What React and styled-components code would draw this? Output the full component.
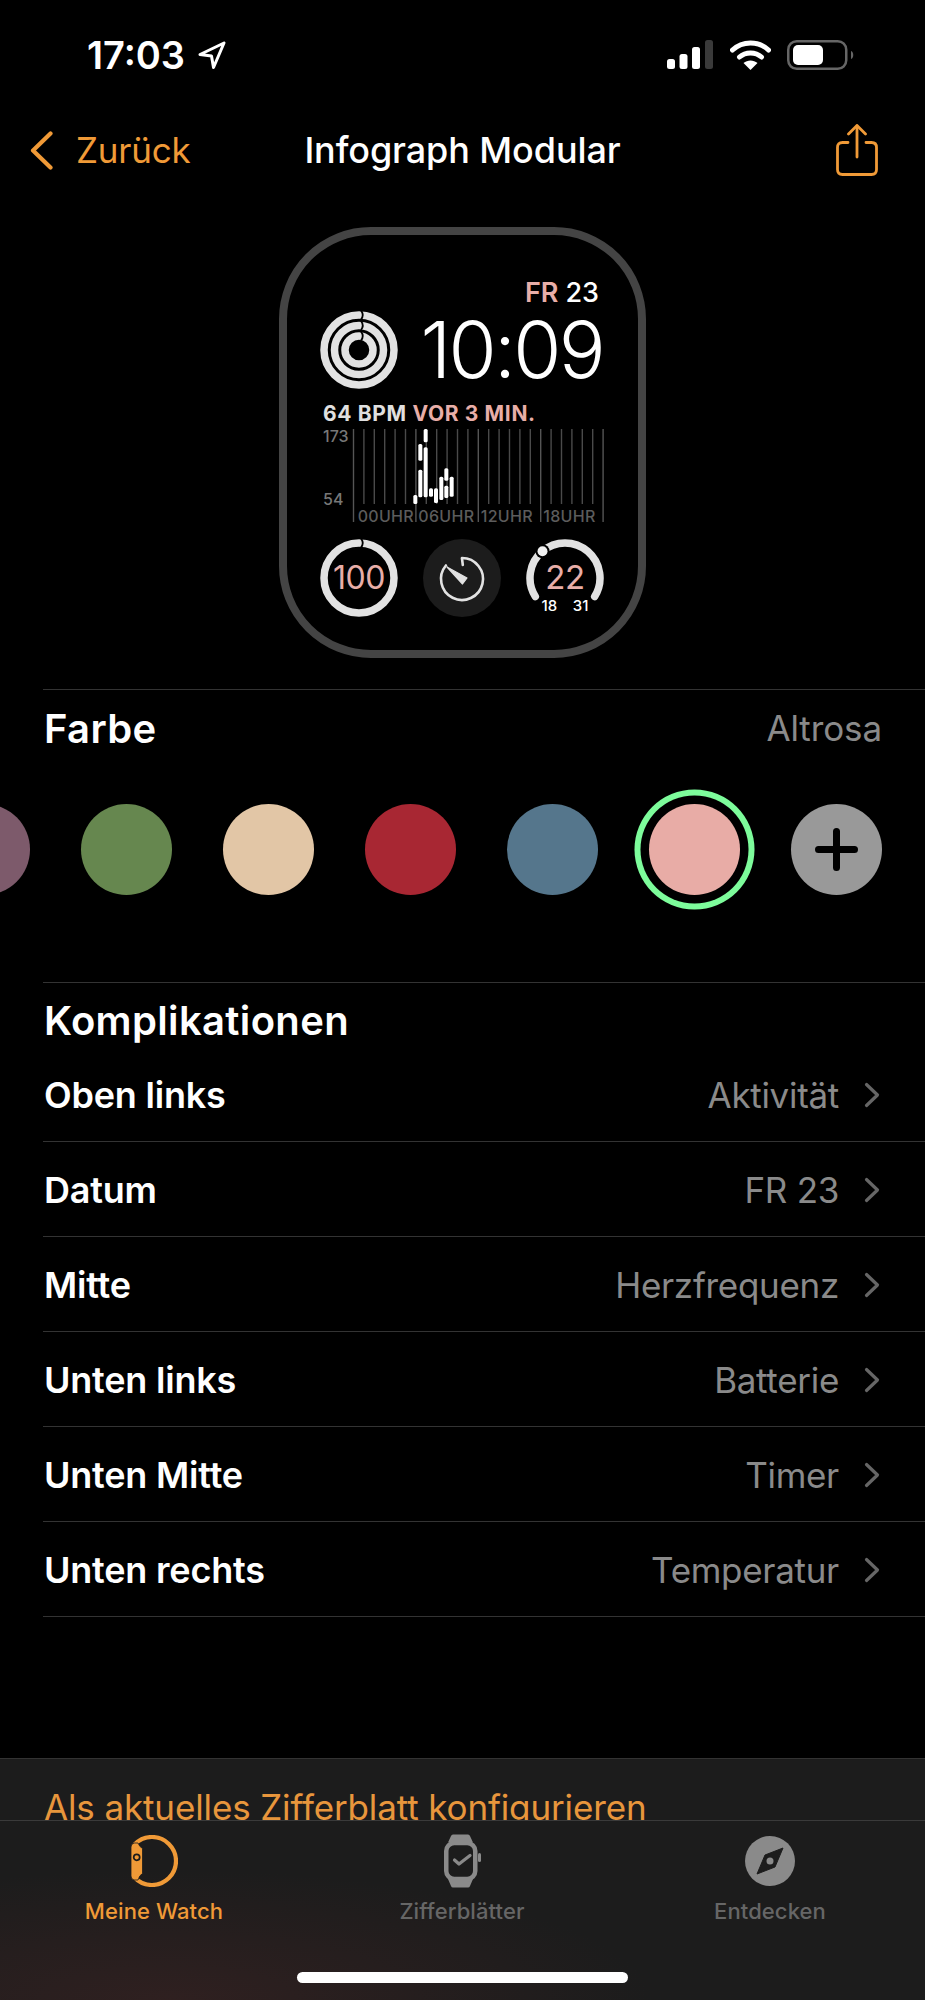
import React from 'react';
import styled, { createGlobalStyle } from 'styled-components';

const GlobalStyle = createGlobalStyle`
    html, body {
        margin: 0;
        padding: 0;
        background: #000;
    }
    body {
        font-family: Inter, "Noto Sans", "Liberation Sans", sans-serif;
        -webkit-font-smoothing: antialiased;
    }
`;

const ORANGE = '#f09a37';
const PINK = '#e8aea8';
const RING = '#e2e2e2';

const Page = styled.div`
    width: 925px;
    height: 2000px;
    display: flex;
    flex-direction: column;
    background: #000;
    color: #fff;
    overflow: hidden;
`;

/* status bar */
const StatusBar = styled.div`
    height: 100px;
    flex-shrink: 0;
    display: flex;
    align-items: center;
    justify-content: space-between;
    padding: 10px 70px 0 87px;
    box-sizing: border-box;
`;

const Clock = styled.div`
    display: flex;
    align-items: center;
    gap: 12px;
    font-size: 38px;
    font-weight: 600;
`;

const StatusIcons = styled.div`
    display: flex;
    align-items: center;
`;

/* nav */
const Nav = styled.div`
    height: 100px;
    flex-shrink: 0;
    display: grid;
    grid-template-columns: 1fr auto 1fr;
    align-items: center;
    padding: 0 47px 0 30px;
`;

const BackLink = styled.div`
    display: flex;
    align-items: center;
    gap: 23px;
    color: ${ORANGE};
    font-size: 35px;
    letter-spacing: -0.2px;
`;

const NavTitle = styled.div`
    font-size: 36px;
    font-weight: 500;
    letter-spacing: -0.1px;
    margin-left: 17px;
`;

const ShareButton = styled.div`
    display: flex;
    justify-content: flex-end;
`;

/* watch preview */
const Preview = styled.div`
    display: flex;
    justify-content: center;
    padding-top: 27px;
    margin-bottom: 31px;
`;

const WatchCase = styled.div`
    width: 367px;
    height: 431px;
    box-sizing: border-box;
    border: 8px solid #444;
    border-radius: 92px;
    padding: 44px 34px 0 33px;
    display: flex;
    flex-direction: column;
`;

const DateLine = styled.div`
    display: flex;
    justify-content: flex-end;
    gap: 7px;
    font-size: 27px;
    line-height: 28px;
    font-weight: 500;
    padding-right: 5px;
`;

const DateDay = styled.span`
    color: ${PINK};
    font-weight: 600;
`;

const TimeLine = styled.div`
    display: flex;
    align-items: center;
    justify-content: space-between;
    height: 78px;
    margin-top: 4px;
    padding-right: 1px;
`;

const BigTime = styled.div`
    font-size: 78px;
    font-weight: 350;
    letter-spacing: -2.7px;
    line-height: 78px;
`;

const Bpm = styled.div`
    font-size: 21px;
    line-height: 24px;
    font-weight: 700;
    letter-spacing: 0.65px;
    color: #e0e0e0;
    margin: 13px 0 0 3px;
    white-space: nowrap;
`;

const BpmAgo = styled.span`
    color: ${PINK};
`;

const ComplicationRow = styled.div`
    display: flex;
    justify-content: space-between;
    margin-top: 12px;
`;

const Complication = styled.div`
    width: 78px;
    height: 78px;
    display: grid;
    place-items: center;
    flex-shrink: 0;
    & > * {
        grid-area: 1 / 1;
    }
`;

const GaugeValue = styled.span`
    color: ${PINK};
    font-size: ${(p) => p.$size}px;
    line-height: 1;
    letter-spacing: -0.5px;
    margin-top: ${(p) => p.$top || 0}px;
`;

const GaugeLimits = styled.div`
    align-self: end;
    width: 47px;
    display: flex;
    justify-content: space-between;
    font-size: 15px;
    line-height: 15px;
    font-weight: 500;
    margin-bottom: 4px;
`;

/* sections */
const Section = styled.div`
    margin-left: 43px;
    border-top: 1px solid #333;
`;

const ColorHeader = styled.div`
    display: flex;
    justify-content: space-between;
    align-items: center;
    height: 76px;
    padding: 0 43px 0 1px;
`;

const SectionTitle = styled.div`
    font-size: 40px;
    font-weight: 600;
    letter-spacing: 0.35px;
`;

const ColorName = styled.div`
    font-size: 35px;
    color: #8a8a8a;
    letter-spacing: -0.1px;
`;

const Swatches = styled.div`
    display: flex;
    align-items: center;
    height: 120px;
    margin: 23px 0 73px -104px;
    gap: 51px;
`;

const Swatch = styled.div`
    width: 91px;
    height: 91px;
    flex-shrink: 0;
    border-radius: 50%;
    background: ${(p) => p.$color};
    display: flex;
    align-items: center;
    justify-content: center;
    box-shadow: ${(p) => (p.$selected ? '0 0 0 8.5px #000, 0 0 0 14.5px #7dfc9b' : 'none')};
`;

const ListHeader = styled.div`
    height: 64px;
    padding: 10px 0 0 1px;
    box-sizing: border-box;
    display: flex;
    align-items: center;
`;

const Row = styled.div`
    height: 95px;
    box-sizing: border-box;
    border-bottom: 1px solid #333;
    display: flex;
    align-items: center;
    justify-content: space-between;
    padding: 2px 45px 0 1px;
`;

const RowLabel = styled.div`
    font-size: 36px;
    font-weight: 600;
    letter-spacing: -0.2px;
`;

const RowValue = styled.div`
    display: flex;
    align-items: center;
    gap: 25px;
    font-size: 35px;
    color: #8a8a8a;
    letter-spacing: -0.3px;
`;

/* bottom */
const BottomPanel = styled.div`
    margin-top: auto;
    height: 242px;
    flex-shrink: 0;
    box-sizing: border-box;
    border-top: 1px solid #333;
    background: radial-gradient(ellipse 480px 130px at 170px 100%, #2f2020 0%, rgba(47, 32, 32, 0) 100%), #1c1c1c;
    display: flex;
    flex-direction: column;
`;

const ActionClip = styled.div`
    height: 62px;
    overflow: hidden;
    border-bottom: 1px solid #3a3a3a;
    flex-shrink: 0;
    padding: 28px 0 0 44px;
    box-sizing: border-box;
`;

const ActionText = styled.div`
    font-size: 35px;
    line-height: 40px;
    color: #e8963c;
    letter-spacing: -0.13px;
    white-space: nowrap;
`;

const TabBar = styled.div`
    display: grid;
    grid-template-columns: repeat(3, 308px);
    padding-top: 13px;
`;

const Tab = styled.div`
    display: flex;
    flex-direction: column;
    align-items: center;
    gap: 10px;
    color: ${(p) => (p.$active ? ORANGE : '#666')};
    font-size: 22px;
    line-height: 26px;
    font-weight: 500;
    letter-spacing: 0.1px;
`;

const TabIcon = styled.div`
    height: 54px;
    display: flex;
    align-items: center;
    justify-content: center;
`;

const HomeIndicator = styled.div`
    width: 331px;
    height: 11px;
    border-radius: 6px;
    background: #fff;
    margin: 48px auto 0;
`;

function polar(cx, cy, r, deg) {
    const a = ((deg - 90) * Math.PI) / 180;
    return [cx + r * Math.cos(a), cy + r * Math.sin(a)];
}

function arc(cx, cy, r, from, to) {
    const [x0, y0] = polar(cx, cy, r, from);
    const [x1, y1] = polar(cx, cy, r, to);
    const large = to - from > 180 ? 1 : 0;
    return `M${x0} ${y0}A${r} ${r} 0 ${large} 1 ${x1} ${y1}`;
}

// the little rounded seam where a ring closes on itself
function seam(cx, cy, r, half) {
    const y = cy - r;
    return `M${cx + 2} ${y - half}Q${cx + 5.5} ${y} ${cx + 2} ${y + half}`;
}

function LocationArrow() {
    return (
        <svg width="30" height="30" viewBox="0 0 30 30" fill="none">
            <path d="M27 3 L3 14.5 L14.5 16 L16.5 27.5 Z" stroke="#fff" strokeWidth="3" strokeLinejoin="round" />
        </svg>
    );
}

function SignalIcon() {
    return (
        <svg width="46" height="30" viewBox="0 0 46 30" style={{ marginRight: 17 }}>
            <rect x="0" y="19" width="8" height="10" rx="2.5" fill="#fff" />
            <rect x="12.5" y="14" width="8" height="15" rx="2.5" fill="#fff" />
            <rect x="25" y="7" width="8" height="22" rx="2.5" fill="#fff" />
            <rect x="38" y="0" width="8" height="29" rx="2.5" fill="#3a3a3a" />
        </svg>
    );
}

function WifiIcon() {
    return (
        <svg width="41" height="30" viewBox="0 0 41 30" fill="none" style={{ marginRight: 16 }}>
            <path d="M2.5 10 C12.5 0.5 28.5 0.5 38.5 10" stroke="#fff" strokeWidth="5" strokeLinecap="round" />
            <path d="M9.5 17 C15.5 11.5 25.5 11.5 31.5 17" stroke="#fff" strokeWidth="5" strokeLinecap="round" />
            <path d="M20.5 30 L13.5 23 C17.5 19.5 23.5 19.5 27.5 23 Z" fill="#fff" />
        </svg>
    );
}

function BatteryIcon() {
    return (
        <svg width="68" height="30" viewBox="0 0 68 30" fill="none">
            <rect x="1.25" y="1.25" width="58" height="27.5" rx="8.5" stroke="#666" strokeWidth="2.5" />
            <rect x="6" y="5" width="30" height="20" rx="5" fill="#fff" />
            <path d="M64 11 C67 12 67 18 64 19 Z" fill="#666" />
        </svg>
    );
}

function BackChevron() {
    return (
        <svg width="23" height="39" viewBox="0 0 23 39" fill="none">
            <path d="M20.5 2.5 L3 19.5 L20.5 36.5" stroke={ORANGE} strokeWidth="4.2" strokeLinecap="round" strokeLinejoin="round" />
        </svg>
    );
}

function ShareIcon() {
    return (
        <svg width="42" height="52" viewBox="0 0 42 52" fill="none" stroke={ORANGE} strokeWidth="2.8" strokeLinecap="round" strokeLinejoin="round">
            <path d="M12 18.5 H6.5 Q1.5 18.5 1.5 23.5 V45.5 Q1.5 50.5 6.5 50.5 H35.5 Q40.5 50.5 40.5 45.5 V23.5 Q40.5 18.5 35.5 18.5 H30" />
            <path d="M21 33 V2" />
            <path d="M12.5 10 L21 1.5 L29.5 10" />
        </svg>
    );
}

function ActivityRings() {
    const radii = [35, 24.5, 14];
    return (
        <svg width="78" height="78" viewBox="0 0 78 78" fill="none">
            {radii.map((r) => (
                <g key={r}>
                    <circle cx="39" cy="39" r={r} stroke={RING} strokeWidth="7.5" />
                    <path d={seam(39, 39, r, 4.5)} stroke="#000" strokeWidth="1.8" />
                </g>
            ))}
        </svg>
    );
}

const BARS = [
    [436, 198, 225], [451, 45, 95], [451, 122, 205], [467, 0, 40], [467, 55, 205],
    [483, 178, 203], [498, 178, 222], [514, 143, 213], [529, 118, 155], [529, 170, 207], [545, 143, 203],
];

const HOURS = [['00UHR', 34.7], ['06UHR', 95.3], ['12UHR', 157.7], ['18UHR', 220.3]];

const ChartText = styled.text`
    font-family: Inter, sans-serif;
    font-weight: 500;
`;

// chart origin in page coords is (323, 428)
function HeartChart() {
    const lines = Array.from({ length: 25 }, (_, i) => i);
    const toX = (x) => 270 + x / 3 - 323;
    const toY = (y) => 430 + y / 3 - 428;
    return (
        <svg width="285" height="100" viewBox="0 0 285 100" style={{ display: 'block', margin: '1px 0 0 3px' }}>
            {lines.map((i) => (
                <line
                    key={i}
                    x1={30.5 + i * 10.4}
                    x2={30.5 + i * 10.4}
                    y1="2"
                    y2={i % 6 === 0 ? 95 : 77}
                    stroke={i % 6 === 0 ? '#555' : '#4a4a4a'}
                    strokeWidth="1.4"
                />
            ))}
            {BARS.map(([x, y0, y1]) => (
                <rect key={`${x}-${y0}`} x={toX(x) - 2} y={toY(y0)} width="4" height={(y1 - y0) / 3} rx="1.5" fill="#fff" />
            ))}
            <ChartText x="0" y="15" fontSize="16" fill="#777">173</ChartText>
            <ChartText x="0" y="78" fontSize="16" fill="#777">54</ChartText>
            {HOURS.map(([t, x]) => (
                <ChartText key={t} x={x} y="95" fontSize="16" letterSpacing="0.3" fill="#5c5c5c">{t}</ChartText>
            ))}
        </svg>
    );
}

function BatteryRing() {
    return (
        <svg width="78" height="78" viewBox="0 0 78 78" fill="none">
            <circle cx="39" cy="39" r="35" stroke={RING} strokeWidth="7.5" />
            <path d={seam(39, 39, 35, 4.5)} stroke="#000" strokeWidth="1.8" />
        </svg>
    );
}

function TimerFace() {
    return (
        <svg width="78" height="78" viewBox="0 0 78 78" fill="none">
            <circle cx="39" cy="39" r="39" fill="#1c1c1c" />
            <path d={arc(39, 40, 21, 0, 310)} stroke={RING} strokeWidth="2.6" strokeLinecap="round" />
            <path d="M39 19.5 L39.8 26" stroke={RING} strokeWidth="2.6" strokeLinecap="round" />
            <path d="M24 28 L44 39 L39.5 45 Z" fill={RING} stroke={RING} strokeWidth="1.2" strokeLinejoin="round" />
        </svg>
    );
}

function TempArc() {
    const [dx, dy] = polar(39, 39, 35, -40);
    return (
        <svg width="78" height="78" viewBox="0 0 78 78" fill="none">
            <path d={arc(39, 39, 35, -122, 122)} stroke={RING} strokeWidth="7.5" strokeLinecap="round" />
            <circle cx={dx} cy={dy} r="7" fill="#000" />
            <circle cx={dx} cy={dy} r="5" fill="#f0f0f0" />
        </svg>
    );
}

function PlusIcon() {
    return (
        <svg width="43" height="43" viewBox="0 0 43 43" fill="none">
            <path d="M21.5 3.5 V39.5 M3.5 21.5 H39.5" stroke="#000" strokeWidth="7" strokeLinecap="round" />
        </svg>
    );
}

function RowChevron() {
    return (
        <svg width="16" height="26" viewBox="0 0 16 26" fill="none">
            <path d="M2.5 2.5 L13.5 13 L2.5 23.5" stroke="#666" strokeWidth="3.2" strokeLinecap="round" strokeLinejoin="round" />
        </svg>
    );
}

function MyWatchIcon() {
    return (
        <svg width="48" height="52" viewBox="0 0 48 52" fill="none">
            <path d={arc(22, 26, 24, -46, 226)} stroke={ORANGE} strokeWidth="4.2" />
            <path
                d="M4 8 H8 Q9.5 12 12.5 13.5 V38.5 Q9.5 40 8 45 H4 Q1 44 1 41 V12 Q1 9 4 8 Z"
                fill={ORANGE}
                stroke="#1c1c1c"
                strokeWidth="0.8"
            />
            <circle cx="6.7" cy="22.3" r="3" stroke="#1c1c1c" strokeWidth="1.7" />
        </svg>
    );
}

function FacesIcon() {
    return (
        <svg width="37" height="54" viewBox="0 0 37 54" fill="none">
            <path d="M9 0.5 H24 Q25.5 0.5 26 2 L29 8.5 H4 L7 2 Q7.5 0.5 9 0.5 Z" fill="#8a8a8a" />
            <path d="M4 45 H29 L26 52 Q25.5 53.5 24 53.5 H9 Q7.5 53.5 7 52 Z" fill="#8a8a8a" />
            <rect x="2.25" y="9" width="29" height="36" rx="8" stroke="#8a8a8a" strokeWidth="4.5" />
            <rect x="34" y="19" width="3" height="9" rx="1.5" fill="#8a8a8a" />
            <path d="M10.5 26 L15 30 L26 21.5" stroke="#8a8a8a" strokeWidth="3.2" strokeLinecap="round" strokeLinejoin="round" />
        </svg>
    );
}

function CompassIcon() {
    return (
        <svg width="50" height="50" viewBox="0 0 50 50" fill="none">
            <circle cx="25" cy="25" r="25" fill="#8a8a8a" />
            <path d="M38 12 L30 31 L12 38 L20 19 Z" fill="#1c1c1c" stroke="#1c1c1c" strokeWidth="1" strokeLinejoin="round" />
            <circle cx="25" cy="25" r="3.5" fill="#8a8a8a" />
        </svg>
    );
}

const COLORS = ['#7d5a6b', '#66874f', '#e2c6a6', '#a82733', '#55768c', '#e8aca6'];

const ROWS = [
    ['Oben links', 'Aktivität'],
    ['Datum', 'FR 23'],
    ['Mitte', 'Herzfrequenz'],
    ['Unten links', 'Batterie'],
    ['Unten Mitte', 'Timer'],
    ['Unten rechts', 'Temperatur'],
];

export default function App() {
    return (
        <>
            <GlobalStyle />
            <Page>
                <StatusBar>
                    <Clock>
                        17:03
                        <LocationArrow />
                    </Clock>
                    <StatusIcons>
                        <SignalIcon />
                        <WifiIcon />
                        <BatteryIcon />
                    </StatusIcons>
                </StatusBar>

                <Nav>
                    <BackLink>
                        <BackChevron />
                        Zurück
                    </BackLink>
                    <NavTitle>Infograph Modular</NavTitle>
                    <ShareButton>
                        <ShareIcon />
                    </ShareButton>
                </Nav>

                <Preview>
                    <WatchCase>
                        <DateLine>
                            <DateDay>FR</DateDay> 23
                        </DateLine>
                        <TimeLine>
                            <ActivityRings />
                            <BigTime>10:09</BigTime>
                        </TimeLine>
                        <Bpm>
                            64 BPM <BpmAgo>VOR 3 MIN.</BpmAgo>
                        </Bpm>
                        <HeartChart />
                        <ComplicationRow>
                            <Complication>
                                <BatteryRing />
                                <GaugeValue $size={32}>100</GaugeValue>
                            </Complication>
                            <Complication>
                                <TimerFace />
                            </Complication>
                            <Complication>
                                <TempArc />
                                <GaugeValue $size={33} $top={-2}>22</GaugeValue>
                                <GaugeLimits>
                                    <span>18</span>
                                    <span>31</span>
                                </GaugeLimits>
                            </Complication>
                        </ComplicationRow>
                    </WatchCase>
                </Preview>

                <Section>
                    <ColorHeader>
                        <SectionTitle>Farbe</SectionTitle>
                        <ColorName>Altrosa</ColorName>
                    </ColorHeader>
                    <Swatches>
                        {COLORS.map((c) => (
                            <Swatch key={c} $color={c} $selected={c === '#e8aca6'} />
                        ))}
                        <Swatch $color="#999">
                            <PlusIcon />
                        </Swatch>
                    </Swatches>
                </Section>

                <Section>
                    <ListHeader>
                        <SectionTitle>Komplikationen</SectionTitle>
                    </ListHeader>
                    {ROWS.map(([label, value]) => (
                        <Row key={label}>
                            <RowLabel>{label}</RowLabel>
                            <RowValue>
                                {value}
                                <RowChevron />
                            </RowValue>
                        </Row>
                    ))}
                </Section>

                <BottomPanel>
                    <ActionClip>
                        <ActionText>Als aktuelles Zifferblatt konfigurieren</ActionText>
                    </ActionClip>
                    <TabBar>
                        <Tab $active>
                            <TabIcon>
                                <MyWatchIcon />
                            </TabIcon>
                            Meine Watch
                        </Tab>
                        <Tab>
                            <TabIcon>
                                <FacesIcon />
                            </TabIcon>
                            Zifferblätter
                        </Tab>
                        <Tab>
                            <TabIcon>
                                <CompassIcon />
                            </TabIcon>
                            Entdecken
                        </Tab>
                    </TabBar>
                    <HomeIndicator />
                </BottomPanel>
            </Page>
        </>
    );
}
